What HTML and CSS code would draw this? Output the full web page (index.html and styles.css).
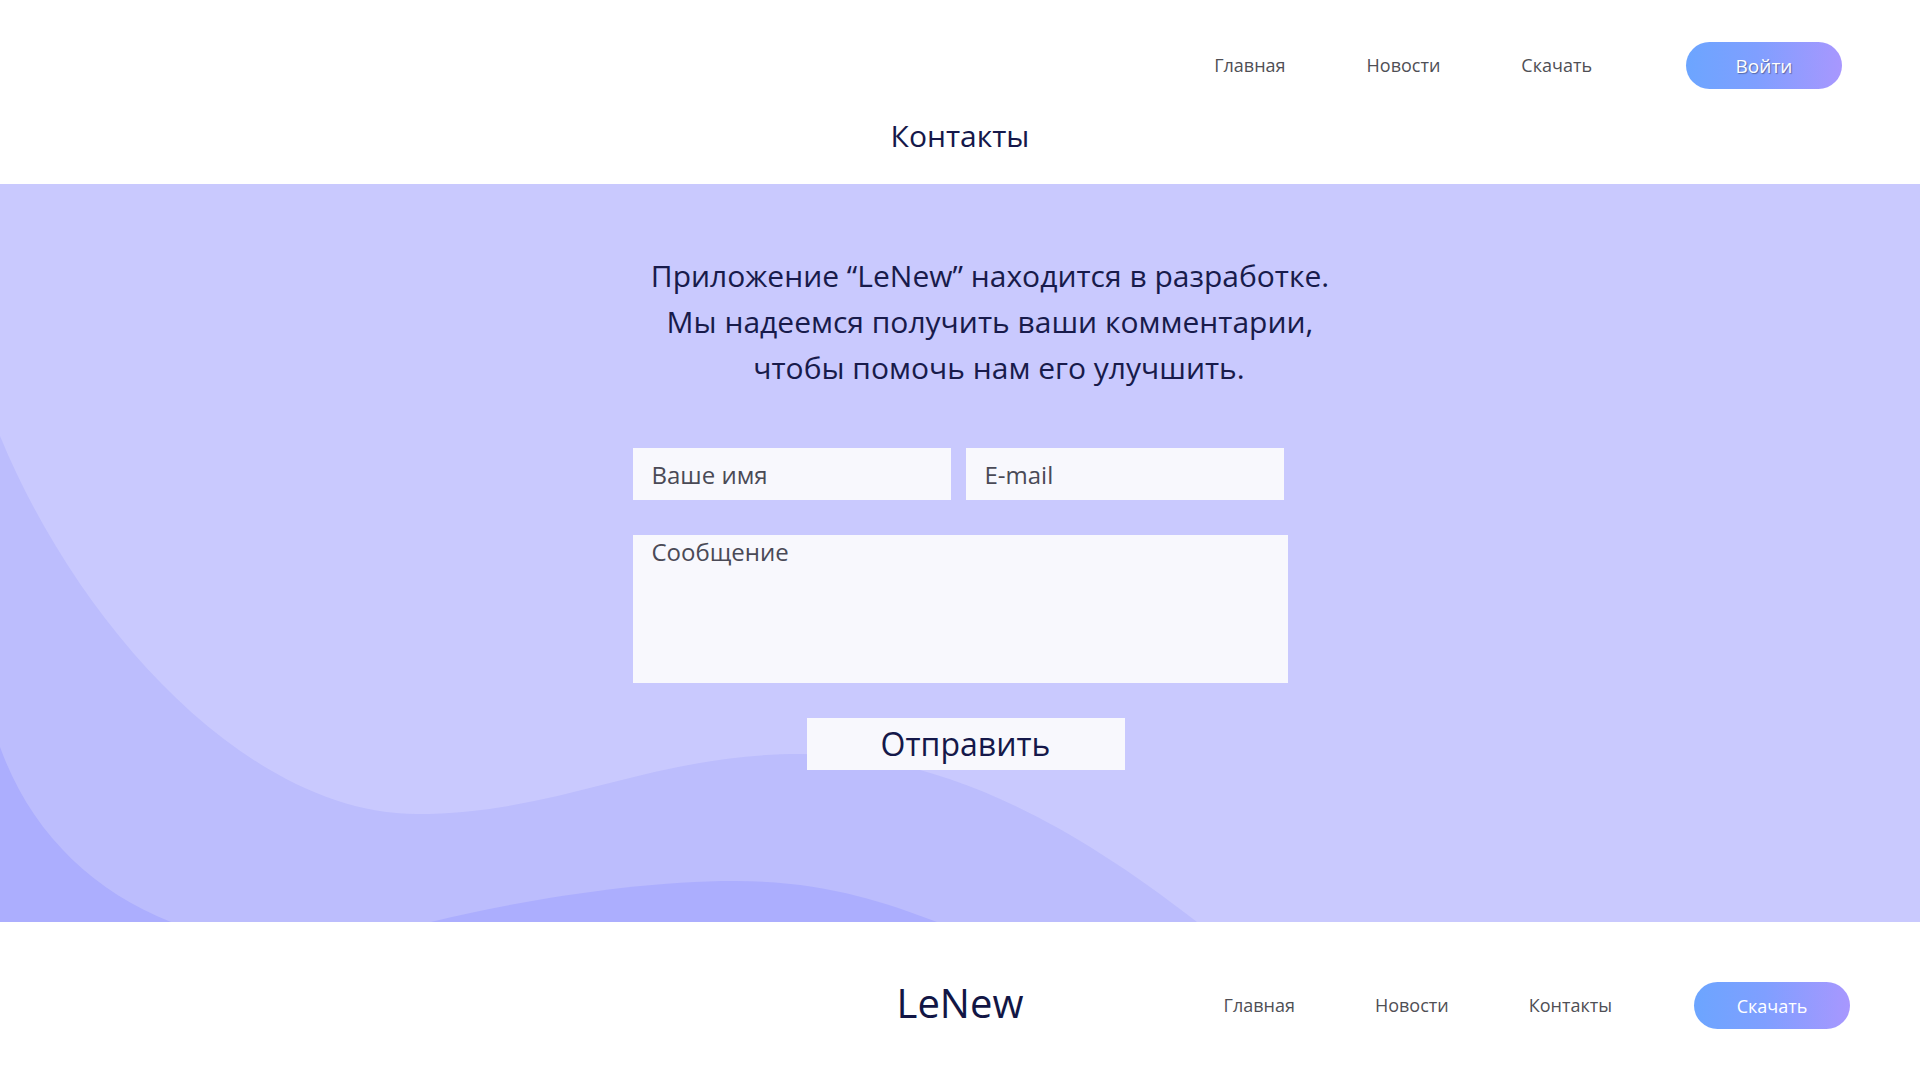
FILE: index.html
```html
<!DOCTYPE html>
<html lang="ru">
<head>
<meta charset="utf-8">
<title>Контакты — LeNew</title>
<link rel="stylesheet" href="styles.css">
</head>
<body>
<header class="header">
  <nav class="topbar">
    <a class="nav-link" href="#">Главная</a>
    <a class="nav-link" href="#">Новости</a>
    <a class="nav-link" href="#">Скачать</a>
    <a class="pill-btn pill-btn--login" href="#">Войти</a>
  </nav>
  <h1 class="page-title">Контакты</h1>
</header>

<main class="contact">
  <svg class="waves" viewBox="0 184 1920 738" preserveAspectRatio="none" aria-hidden="true">
    <path class="wave-mid" d="M0,436 C80,630 250,814 417,814 C560,814 650,754 800,754 C920,754 1040,800 1197,922 L0,922 Z"/>
    <path class="wave-dark" d="M0,747 C30,830 90,890 171,922 L0,922 Z"/>
    <path class="wave-dark" d="M431,922 C520,900 640,881 735,881 C820,881 880,900 937,922 Z"/>
  </svg>

  <div class="contact-inner">
    <p class="intro">
      <span class="intro-line">Приложение “LeNew” находится в разработке.</span>
      <span class="intro-line">Мы надеемся получить ваши комментарии,</span>
      <span class="intro-line intro-line--last">чтобы помочь нам его улучшить.</span>
    </p>

    <form class="form">
      <div class="form-row">
        <input class="field" type="text" placeholder="Ваше имя">
        <input class="field" type="email" placeholder="E-mail">
      </div>
      <textarea class="field field--message" placeholder="Сообщение"></textarea>
      <button class="submit" type="button">Отправить</button>
    </form>
  </div>
</main>

<footer class="footer">
  <div class="footer-spacer"></div>
  <div class="logo">LeNew</div>
  <nav class="footer-nav">
    <a class="nav-link" href="#">Главная</a>
    <a class="nav-link" href="#">Новости</a>
    <a class="nav-link" href="#">Контакты</a>
    <a class="pill-btn pill-btn--download" href="#">Скачать</a>
  </nav>
</footer>
</body>
</html>
```

FILE: styles.css
```css
* {
  box-sizing: border-box;
}

html, body {
  margin: 0;
  padding: 0;
  background: #ffffff;
}

body {
  font-family: "Open Sans", "Noto Sans", "Liberation Sans", sans-serif;
  color: #171a48;
  width: 1920px;
  height: 1080px;
  overflow: hidden;
}

a {
  text-decoration: none;
}

/* ---------- header ---------- */
.header {
  height: 184px;
  display: flex;
  flex-direction: column;
}

.topbar {
  display: flex;
  justify-content: flex-end;
  align-items: center;
  gap: 81px;
  padding: 42px 78px 0 0;
}

.nav-link {
  font-size: 18px;
  line-height: 24px;
  padding-bottom: 2px;
  color: #4f4f55;
}

.pill-btn {
  display: flex;
  align-items: center;
  justify-content: center;
  width: 156px;
  height: 47px;
  border-radius: 24px;
  background: linear-gradient(90deg, #6ca5ff 0%, #7f9fff 45%, #a897fe 100%);
  color: #ffffff;
  font-size: 18px;
}

.pill-btn--login {
  margin-left: 13px;
  font-size: 19px;
  text-shadow: 1px 1px 1px rgba(40, 40, 60, 0.45);
}

.page-title {
  margin: 27px 0 0;
  text-align: center;
  font-size: 30px;
  line-height: 40px;
  font-weight: 400;
  color: #15184a;
}

/* ---------- contact section ---------- */
.contact {
  position: relative;
  height: 738px;
  background: #c9c9fe;
  overflow: hidden;
}

.waves {
  position: absolute;
  left: 0;
  top: 0;
  width: 1920px;
  height: 738px;
  z-index: 0;
}

.wave-mid {
  fill: #bcbdfd;
}

.wave-dark {
  fill: #acaefe;
}

.contact-inner {
  position: relative;
  z-index: 1;
  padding-top: 69px;
  display: flex;
  flex-direction: column;
  align-items: center;
}

.intro {
  margin: 0;
  padding-left: 60px;
  font-size: 30px;
  line-height: 46px;
  text-align: center;
  color: #181b4b;
}

.intro-line {
  display: block;
}

.intro-line--last {
  padding-left: 18px;
}

.form {
  margin-top: 57px;
  width: 655px;
  display: flex;
  flex-direction: column;
  align-items: flex-start;
}

.form-row {
  display: flex;
  gap: 15px;
}

.field {
  display: block;
  width: 318px;
  height: 52px;
  border: none;
  outline: none;
  border-radius: 0;
  background: #f8f8fd;
  padding: 0 0 0 19px;
  font-family: "Open Sans", "Noto Sans", sans-serif;
  font-size: 24px;
  color: #4a4a56;
}

.field::placeholder {
  color: #4a4a56;
  opacity: 1;
}

.field--message {
  margin-top: 35px;
  width: 655px;
  height: 148px;
  padding: 2px 0 0 19px;
  line-height: 30px;
  resize: none;
}

.submit {
  margin: 35px 0 0 174px;
  width: 318px;
  height: 52px;
  border: none;
  border-radius: 0;
  background: #f8f8fd;
  font-family: "Open Sans", "Noto Sans", sans-serif;
  font-size: 32px;
  line-height: 52px;
  padding: 0;
  color: #15184a;
  cursor: pointer;
}

/* ---------- footer ---------- */
.footer {
  height: 158px;
  padding-top: 60px;
  display: grid;
  grid-template-columns: 1fr auto 1fr;
  align-items: start;
}

.logo {
  font-size: 40px;
  line-height: 47px;
  margin-top: -3px;
  color: #121645;
}

.footer-nav {
  justify-self: end;
  display: flex;
  align-items: center;
  gap: 80px;
  padding-right: 70px;
  height: 47px;
}

.pill-btn--download {
  margin-left: 2px;
}
```
